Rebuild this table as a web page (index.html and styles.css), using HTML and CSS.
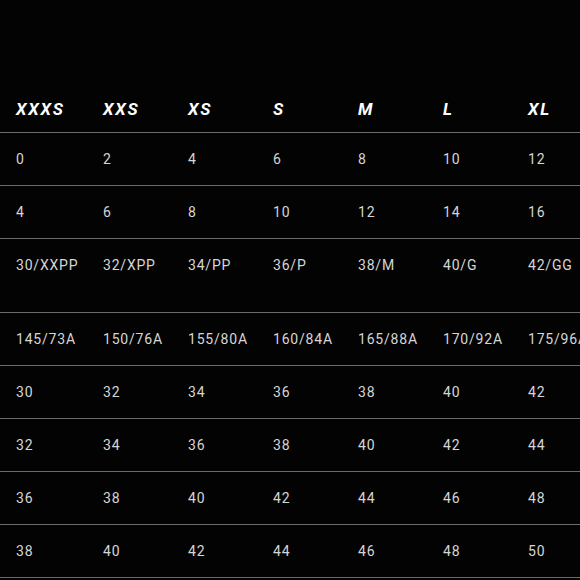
FILE: index.html
```html
<!DOCTYPE html>
<html lang="en">
<head>
<meta charset="utf-8">
<title>Size chart</title>
<link rel="stylesheet" href="styles.css">
</head>
<body>
<div class="page">
  <table class="sizes">
    <colgroup>
      <col class="c-first"><col class="c"><col class="c"><col class="c"><col class="c"><col class="c"><col class="c">
    </colgroup>
    <thead>
      <tr><th>XXXS</th><th>XXS</th><th>XS</th><th>S</th><th>M</th><th>L</th><th>XL</th></tr>
    </thead>
    <tbody>
      <tr><td>0</td><td>2</td><td>4</td><td>6</td><td>8</td><td>10</td><td>12</td></tr>
      <tr><td>4</td><td>6</td><td>8</td><td>10</td><td>12</td><td>14</td><td>16</td></tr>
      <tr class="tall"><td>30/XXPP</td><td>32/XPP</td><td>34/PP</td><td>36/P</td><td>38/M</td><td>40/G</td><td>42/GG</td></tr>
      <tr><td>145/73A</td><td>150/76A</td><td>155/80A</td><td>160/84A</td><td>165/88A</td><td>170/92A</td><td>175/96A</td></tr>
      <tr><td>30</td><td>32</td><td>34</td><td>36</td><td>38</td><td>40</td><td>42</td></tr>
      <tr><td>32</td><td>34</td><td>36</td><td>38</td><td>40</td><td>42</td><td>44</td></tr>
      <tr><td>36</td><td>38</td><td>40</td><td>42</td><td>44</td><td>46</td><td>48</td></tr>
      <tr><td>38</td><td>40</td><td>42</td><td>44</td><td>46</td><td>48</td><td>50</td></tr>
    </tbody>
  </table>
</div>
</body>
</html>
```
FILE: styles.css
```css
html, body {
  margin: 0;
  padding: 0;
  background: #030303;
  overflow: hidden;
}
.page {
  padding-top: 86px;
  width: 597px;
}
.sizes {
  border-collapse: collapse;
  table-layout: fixed;
  width: 597px;
  font-family: Roboto, "Liberation Sans", sans-serif;
}
.c-first { width: 87px; }
.c { width: 85px; }
.sizes th {
  text-align: left;
  color: #ffffff;
  font-size: 17px;
  font-weight: 700;
  font-style: italic;
  letter-spacing: 1.8px;
  line-height: 20px;
  padding: 13px 0 13px 16px;
  border-bottom: 1px solid #6b6b6b;
  white-space: nowrap;
}
.sizes td {
  color: #d6d6d6;
  font-size: 14px;
  letter-spacing: 0.8px;
  line-height: 15px;
  padding: 19px 0 18px 16px;
  border-bottom: 1px solid #6b6b6b;
  vertical-align: top;
  white-space: nowrap;
}
.sizes tr.tall td {
  padding-bottom: 39px;
}
```
